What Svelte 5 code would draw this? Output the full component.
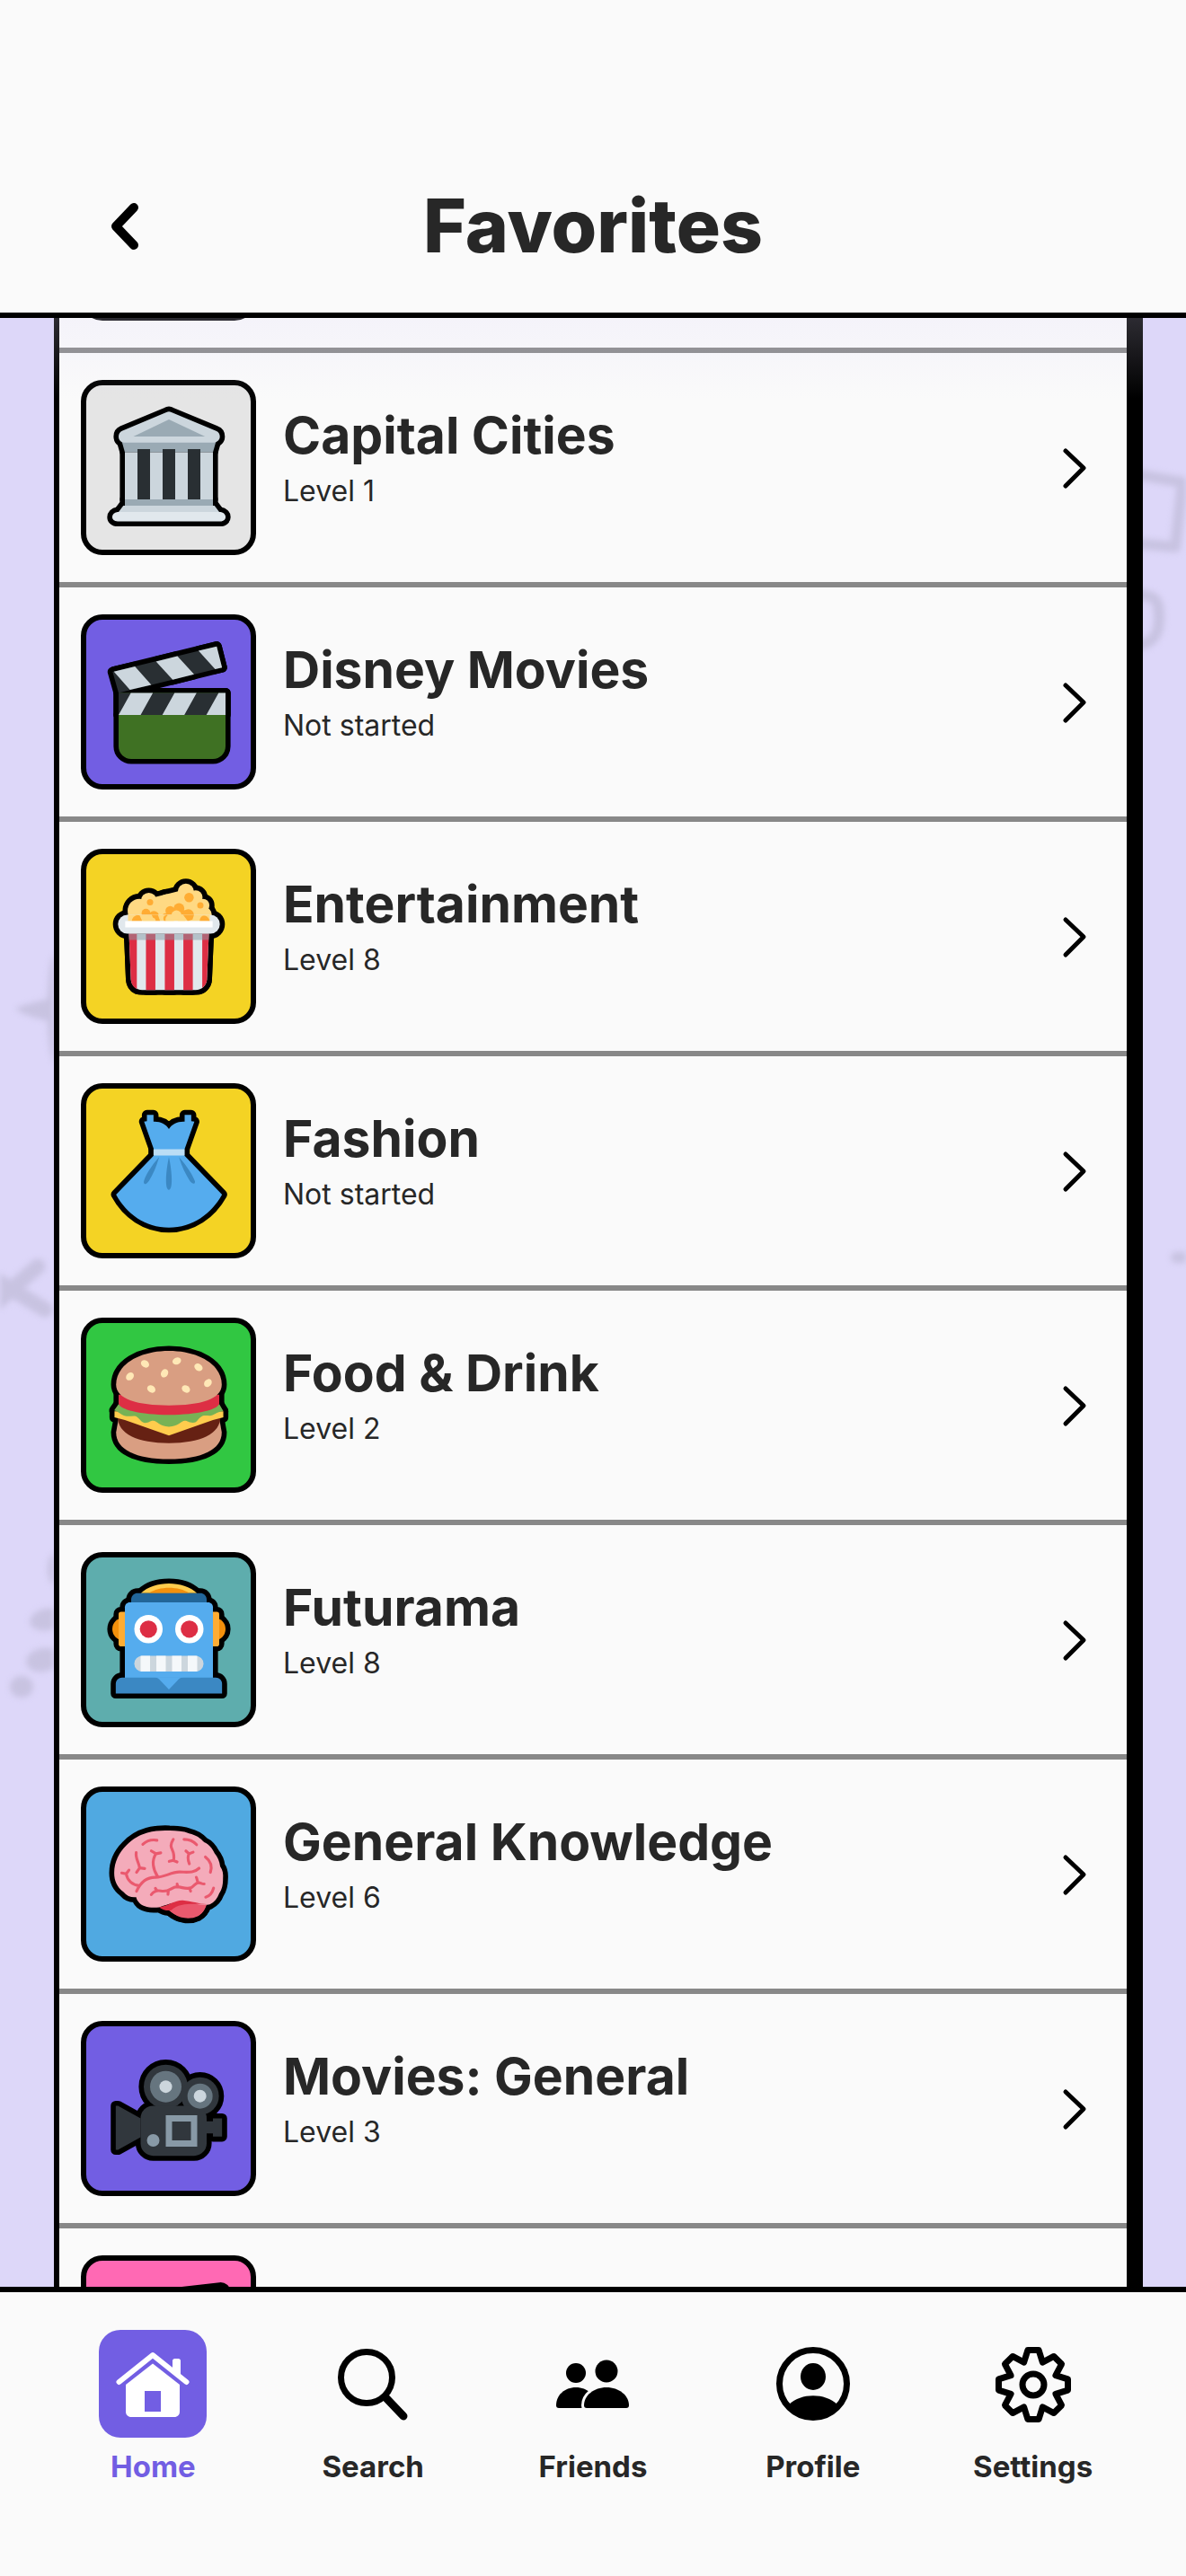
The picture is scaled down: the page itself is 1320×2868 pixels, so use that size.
<script>
  import { onMount } from 'svelte'

  const categories = [
    { title: '', level: '', icon: '', color: '#e5e5e5' },
    { title: 'Capital Cities', level: 'Level 1', icon: 'bank', color: '#e5e5e5' },
    { title: 'Disney Movies', level: 'Not started', icon: 'clapper', color: '#725ee3' },
    { title: 'Entertainment', level: 'Level 8', icon: 'popcorn', color: '#f4d324' },
    { title: 'Fashion', level: 'Not started', icon: 'dress', color: '#f4d324' },
    { title: 'Food & Drink', level: 'Level 2', icon: 'burger', color: '#31c742' },
    { title: 'Futurama', level: 'Level 8', icon: 'robot', color: '#5eadad' },
    { title: 'General Knowledge', level: 'Level 6', icon: 'brain', color: '#50a9e1' },
    { title: 'Movies: General', level: 'Level 3', icon: 'camera', color: '#725ee3' },
    { title: '', level: '', icon: 'note', color: '#ff69b4' },
  ]

  const tabs = ['Home', 'Search', 'Friends', 'Profile', 'Settings']
  let active = 'Home'

  const seeds = [
    [5.6, 8.7, -45],
    [10.4, 4.7, 35],
    [16.6, 7.7, -60],
    [20.5, 3.8, -20],
    [27.4, 5.8, 35],
    [30.4, 10.8, -50],
    [12.4, 12.7, 35],
    [23.4, 12.7, 35],
  ]

  // eight teeth, each one two outer corners and the valley after it
  const point = (deg, r) => {
    const a = (deg * Math.PI) / 180
    return `${(60 + r * Math.sin(a)).toFixed(2)},${(61 - r * Math.cos(a)).toFixed(2)}`
  }
  const gear = [0, 45, 90, 135, 180, 225, 270, 315]
    .map((d) => [point(d - 9, 39), point(d + 9, 39), point(d + 22.5, 27)].join(' '))
    .join(' ')

  let scroller
  onMount(() => {
    scroller.scrollTop = 222
  })
</script>

<style>
  :global(body) {
    margin: 0;
    background: #ddd7f9;
  }
  .app {
    display: flex;
    flex-direction: column;
    height: 100vh;
    font-family: Inter, 'Liberation Sans', sans-serif;
    color: #272727;
    background: #ddd7f9;
  }
  .sprite {
    position: absolute;
    width: 0;
    height: 0;
  }
  header {
    display: grid;
    grid-template-columns: 120px 1fr 120px;
    align-items: center;
    padding: 156px 78px 0;
    height: 192px;
    border-bottom: 6px solid #000;
    background: #fafafa;
  }
  h1 {
    margin: 0;
    font-size: 82px;
    line-height: 192px;
    font-weight: 800;
    text-align: center;
  }
  button {
    padding: 0;
    border: 0;
    background: none;
    font: inherit;
    color: inherit;
    cursor: pointer;
  }
  .back {
    display: flex;
    justify-content: center;
  }
  main {
    position: relative;
    flex: 1;
    min-height: 0;
  }
  main::after {
    content: '';
    position: absolute;
    top: 0;
    left: 0;
    right: 0;
    height: 90px;
    background: linear-gradient(rgba(221, 215, 249, 0.2), rgba(221, 215, 249, 0));
    pointer-events: none;
  }
  .doodles {
    position: absolute;
    top: 0;
    width: 60px;
    height: 2192px;
    fill: #c8c3e1;
    stroke: #c8c3e1;
    stroke-linecap: round;
    stroke-linejoin: round;
    filter: blur(3px);
  }
  .left {
    left: 0;
  }
  .right {
    right: 0;
  }
  .scroller {
    position: relative;
    height: 100%;
    overflow-y: auto;
    scrollbar-width: none;
  }
  ul {
    list-style-type: none;
    margin: 0 48px 0 60px;
    padding: 0;
    border-left: 6px solid #000;
    border-right: 18px solid #000;
    background: #fafafa;
  }
  li {
    border-bottom: 6px solid #888;
  }
  .row {
    display: flex;
    align-items: center;
    gap: 30px;
    width: 100%;
    padding: 30px 36px 30px 24px;
    text-align: left;
  }
  .tile {
    box-sizing: border-box;
    display: flex;
    align-items: center;
    justify-content: center;
    width: 195px;
    height: 195px;
    border: 6px solid #000;
    border-radius: 24px;
  }
  .tile svg {
    width: 126px;
    height: 126px;
    overflow: visible;
  }
  .outline {
    stroke: #000;
    stroke-width: 3.2;
    stroke-linejoin: round;
  }
  .text {
    flex: 1;
    display: flex;
    flex-direction: column;
    height: 144px;
  }
  .title {
    font-size: 57px;
    line-height: 72px;
    font-weight: 700;
  }
  .level {
    font-size: 32px;
    line-height: 52px;
  }
  nav {
    display: flex;
    padding: 42px 48px 96px;
    border-top: 6px solid #000;
    background: #fafafa;
  }
  .tab {
    flex: 1;
    display: flex;
    flex-direction: column;
    align-items: center;
    gap: 12px;
    height: 178px;
    font-size: 33px;
    line-height: 40px;
    font-weight: 700;
  }
  .tab svg {
    width: 120px;
    height: 120px;
    border-radius: 24px;
  }
  .tab.active {
    color: #725ee3;
  }
  .tab.active svg {
    background: #725ee3;
  }
</style>

<svg class="sprite" aria-hidden="true">
  <defs>
    <g id="bank">
      <path fill="#9aaab4" d="M3 9.5h30L32 13H4z" />
      <path fill="#ccd6dd" d="M34.2 8c0 1.1-.9 1.9-2 1.9H3.8C2.7 9.9 2 9.1 2 8c0-.8.4-1.5 1.1-1.8L17.2.3c.5-.3 1.1-.3 1.6 0L33 6.2c.8.3 1.2 1 1.2 1.8z" />
      <path fill="#9aaab4" d="M18 2.6 29.5 8H6.7z" />
      <path fill="#ccd6dd" d="M4 13h28v15H4z" />
      <path fill="#292f33" d="M8 12h4v16H8zm8 0h4v16h-4zm8 0h4v16h-4z" />
      <path fill="#9aaab4" d="M4 28h28v2H4z" />
      <path fill="#ccd6dd" d="M3.5 30h29l1.5 2H2z" />
      <path fill="#e1e8ed" d="M1.7 32h32.6c2.3.3 2.3 3 0 3H1.7c-2.3 0-2.3-2.7 0-3z" />
    </g>
    <g id="clapper">
      <path fill="#3f7123" d="M2 15h34v17c0 2.2-1.8 4-4 4H6c-2.2 0-4-1.8-4-4z" />
      <path fill="#292f33" d="M2 15h34v7H2z" />
      <path fill="#ccd6dd" d="M5.9 15h7L9 22H2zM19.8 15h7l-3.9 7h-7zM33.8 15H36v7h-6.1z" />
      <path fill="#292f33" d="M.1 8.3 33.2.2l1.7 6.7L2 15z" />
      <path fill="#ccd6dd" d="M.5 8.2l6.700-1.600 5.200 5.800L5.600 14zM13.900 5l6.800-1.700L26 9.100l-6.800 1.700zM27.400 1.600 33.200.2l1.700 6.700-2.200.5z" />
    </g>
    <g id="popcorn">
      <g fill="#ffd983">
        <path d="M5 14V9l6-3 12-3 6 5 2.5 6z" />
        <circle cx="8.6" cy="9.6" r="3.7" />
        <circle cx="11.6" cy="6.5" r="2.5" />
        <circle cx="17.3" cy="6.9" r="2.5" />
        <circle cx="23.4" cy="3.7" r="2.6" />
        <circle cx="26.5" cy="5.4" r="2.2" />
        <circle cx="28.8" cy="8" r="2.1" />
        <circle cx="29" cy="11" r="2.6" />
      </g>
      <g fill="#ffac33">
        <circle cx="12" cy="7" r="1" />
        <circle cx="24.4" cy="5.5" r="1.5" />
        <circle cx="28" cy="8" r="1" />
        <circle cx="24.2" cy="10.9" r="1.7" />
        <circle cx="7.7" cy="12.5" r="1.6" />
        <circle cx="10.7" cy="10.5" r="1.4" />
        <circle cx="13.2" cy="11.5" r="1.7" />
        <circle cx="17" cy="11.8" r="1.3" />
        <circle cx="18.4" cy="9.7" r="1.5" />
        <circle cx="21.2" cy="9" r="1.7" />
        <circle cx="23.2" cy="11.5" r="2" />
      </g>
      <path fill="#e1e8ed" d="M5.3 17h25.4l-.6 14.5c-.1 2-1.6 3.4-3.6 3.4h-17c-2 0-3.500-1.400-3.600-3.400z" />
      <path fill="#dd2e44" d="M5.3 17h2.5v17.6c-1.1-.5-1.8-1.7-1.9-3.1zM10.7 17h3v17.9h-3zM16.7 17h3v17.9h-3zM22.6 17h3v17.9h-3zM28.6 17h2.1l-.6 14.5c0 1.1-.6 2.1-1.5 2.8z" />
      <path fill="#8899a6" opacity=".5" d="M5.3 17h25.4l-.1 2H5.4z" />
      <rect x="1.8" y="11" width="32.4" height="6" rx="3" fill="#e1e8ed" />
      <path fill="#ffd983" d="M5 11h26v2H5z" />
      <path fill="#ffac33" d="M6.2 13c.2-1.500 1.300-2.100 2.500-1.800L9.500 13zM12.500 11h2l.7 2h-1.700zM16.500 13c-.7-1.300.2-2 1-2l.3 2zM22.500 11h3.500l-.5 1.500-1.500.5zM27.800 13c.1-2.400 2.700-2.200 3.200 0z" />
      <g fill="#ffd983">
        <circle cx="11" cy="12.5" r="1.4" />
        <circle cx="12.7" cy="13" r="1.1" />
        <circle cx="18.3" cy="12.5" r="1.4" />
        <circle cx="20.4" cy="11.2" r="1.6" />
        <circle cx="22" cy="12.8" r="1.2" />
      </g>
      <path fill="#fff" d="M4.1 13h27.8v2H4.1z" />
    </g>
    <g id="dress">
      <path fill="#55acee" d="M11 .1h2.1v2.1c2.200-.1 4 .8 4.900 2.400.9-1.600 2.700-2.500 5-2.400V.1h2.100v2l1 .1-3.200 9V13l12 12.400C31.500 31.500 25.500 35.900 18 35.900S4.500 31.500 1.200 25.400l12-12.400v-2L10.100 2.200l.9-.1z" />
      <path fill="#bbddf5" d="M13.1 11H23v2h-9.900z" />
      <path fill="#3b88c3" d="M18 13.5c-1.100 5-1.300 10.400 0 10.400s1.100-5.400 0-10.400zM14.9 13.5c-2.500 2.700-4.800 6.500-4.900 8 .2 1.200 1.200.3 1.700-.5 1.200-1.900 2.300-4.400 3.200-7.500zM21.2 13.5c2.500 2.700 4.700 6.300 5.100 7.800 0 1.200-1.200.5-1.700-.3-1.200-1.900-2.500-4.400-3.400-7.500z" />
    </g>
    <g id="burger">
      <path fill="#d99e82" d="M1.2 26.500C1.2 32 7.500 35 18 35s16.800-3 16.800-8.500L34 22H2z" />
      <path fill="#662113" d="M1.7 21.5h32.7c0 5.500-6.400 8.400-16.400 8.400S1.700 27 1.700 21.500z" />
      <path fill="#ffcc4d" d="M.7 19.8h34.600v1.900L32 22.600 18 27.500 4 22.600.7 21.700z" />
      <path fill="#77b255" d="M.6 19.5l1.400-2h32l1.300 2.200c-2.300.3-3 1.500-4.300 1.500s-2-.3-3 .5-1 1.700-2.400 1.700-1.600-.6-2.600-.6-2 1.900-5 1.900-3.800-1.900-5-1.900-1.200.7-2.600.7-2-2.200-3.400-2.200-2.500.3-3.500-.2-1.500-1.100-2.900-1.600z" />
      <path fill="#dd2e44" d="M2 14.500v2.700c0 2 7 3.700 16 3.700s16-1.700 16-3.700v-2.700z" />
      <path fill="#d99e82" d="M34.8 11.300C34.8 16 28 17.900 18 17.900S1.200 16 1.200 11.300C1.200 5 8.500.6 18 .6s16.800 4.400 16.800 10.700z" />
      {#each seeds as [x, y, angle]}
        <ellipse cx={x} cy={y} rx="1.4" ry="1.1" fill="#ffe8b6" transform="rotate({angle} {x} {y})" />
      {/each}
    </g>
    <g id="robot">
      <path fill="#ffcc4d" d="M9.1 3.1C13.3-1 22.700-1 26.900 3.100z" />
      <path fill="#f4900c" d="M11.600 3.100c3.400-2.300 9.500-2.300 12.900 0z" />
      <path fill="#226699" d="M8 3.1h20c1.100 0 2 .9 2 2V7H6V5.100c0-1.100.9-2 2-2z" />
      <circle cx="3.6" cy="14.5" r="3.6" fill="#f4900c" />
      <circle cx="32.4" cy="14.5" r="3.6" fill="#f4900c" />
      <rect x="2" y="9" width="4" height="11" rx=".8" fill="#ffac33" />
      <rect x="30" y="9" width="4" height="11" rx=".8" fill="#ffac33" />
      <path fill="#55acee" d="M5.5 6h25c.8 0 1.5.7 1.5 1.500V30H4V7.500C4 6.700 4.700 6 5.500 6z" />
      <path fill="#3b88c3" d="M3.1 29.900h29.800c1.100 0 2 .9 2 2V35H1.100v-3.100c0-1.100.9-2 2-2z" />
      <path fill="#55acee" d="M13.3 29.8h9.400c-1 .1-1.500.5-2.100 1.200L18 33.700 15.400 31c-.6-.7-1.100-1.100-2.100-1.200z" />
      <circle cx="11.5" cy="14.5" r="4.5" fill="#fff" />
      <circle cx="24.5" cy="14.5" r="4.5" fill="#fff" />
      <circle cx="11.5" cy="14.5" r="2.75" fill="#dd2e44" />
      <circle cx="24.5" cy="14.5" r="2.75" fill="#dd2e44" />
      <rect x="7" y="23" width="22" height="5" rx="2.5" fill="#ccd6dd" />
      <path fill="#f5f8fa" d="M9 23h3v5H9zM14 23h3v5h-3zM19 23h3v5h-3zM24 23h3v5h-3z" />
    </g>
    <g id="brain">
      <path fill="#ea596e" d="M17.8 29.3 22 26.800l8 .8c-.7 2-1.500 2.900-2.700 3.600-2.400 1.200-5.700.8-7.600-.6z" />
      <path fill="#f4abba" d="M.6 17.5C.6 14 2.200 11 4.400 8.800 6.500 6.500 9 5.300 11.100 4.700 13.500 4 16 3.900 18.200 4c2.200 0 4.500.2 6.200.9 2.300.5 3.600 1.500 4.800 2.800 1.700.8 2.600 2 3.300 3.500 1 1.200 1.600 2.500 1.800 4.200.9 1.200 1 2.500.9 3.900 0 2-.3 3.400-1.200 4.700-.6 1.700-1.600 2.800-3 3.500-2.500.7-5.800-.6-9-.9-3 .3-5 1.200-7.100 1.800-2.600.4-5.400-.1-6.500-1.600-.4-.5-.7-1-.8-1.600-1.500.2-2.900-.3-4.100-1.700C1.500 22 .6 20 .6 17.500z" />
      <path fill="#dd2e44" d="M14.9 28.400c3.100-.6 5.100-2.300 7.500-2.200 2.700.2 5.300 1.200 7.600 1.200-4.500.1-8.500-.6-11.300 2-1.400.2-2.800-.2-3.800-1z" />
      <path fill="#ea596e" d="M18.4 29.600c2.900-2.300 6.900-1.700 11.500-2-.6 1.900-1.500 2.900-2.600 3.500-2.700 1.200-6.800.7-8.900-1.500z" />
      <path
        fill="none"
        stroke="#ea596e"
        stroke-width=".9"
        stroke-linecap="round"
        stroke-linejoin="round"
        d="M9.7 8.400c1.200-1.100 2.900-1.600 4.500-1.300M7.600 11c-.3 1.900.8 3 1.100 4.900M7.700 17.300l1-1.400 1.600.2M3 17.500l1.400.3.900-1.200M4.400 17.800c.4 2.100 2 3.600 4.100 3.700M7.700 23.300c1.200-2.600 2.900-4.400 5.900-4.400 2.900.1 5-1.700 7.700-1.700s4.600.4 6.300-1.200M12.400 10.500l1.500.9 1.500-.3M13.900 11.400c-1.500 2.100-1 5 .5 7.200M19.400 6.800c-2 3.300.8 2.800.1 6.800M18.100 13.800l1.300-.3 1.200.5M22.800 6.800c1.600 0 3 .6 4 1.700M23.400 10.500l1 .9 1.300-.5M24.400 11.400c-.7 1.100-.3 2.100.1 3.200M29.600 12.400c1.700 1.300 2.200 3 1.600 4.900M32.200 22.300c-.4 1.500-1.200 2.500-2.500 2.900M12.400 24.400c.8-1.100 1.800-1.400 3-1.200 2.700.6 3.200-1.200 5.200-1.300 1.700.1 3.100 1 4.600.2 1-.7 1.300-1.500 2.300-1.500.7 0 1 .5 1.700.4M13.700 22.400l.5.8M17.800 23.400l-.1.900M20.600 21l.2.900M24.600 22.400l.3.900M26.700 18.900c.4.600.1 1.100.7 1.700"
      />
    </g>
    <g id="camera">
      <path fill="#31373d" d="M1.1 17h.7L9 21v6l-7.200 4h-.7zM30 21.900h2V21h2.900v5.800H32v-1H30z" />
      <circle cx="17" cy="10.9" r="7" fill="#31373d" />
      <circle cx="27.9" cy="13.9" r="6" fill="#31373d" />
      <rect x="9" y="17" width="21" height="15.9" rx="4" fill="#31373d" />
      <circle cx="17" cy="10.9" r="5" fill="#66757f" />
      <circle cx="17" cy="10.9" r="2" fill="#ccd6dd" />
      <circle cx="27.9" cy="13.9" r="4" fill="#66757f" />
      <circle cx="27.9" cy="13.9" r="2" fill="#ccd6dd" />
      <path fill="#8899a6" d="M17 20h10v10H17z" />
      <path fill="#31373d" d="M19 22h6v6h-6z" />
      <circle cx="13" cy="28" r="2" fill="#8899a6" />
    </g>
    <g id="note">
      <path fill="#5dadec" d="M34.2.2 11.8 2.800C10.800 2.900 10 3.800 10 4.800v18.800A8 8 0 0 0 7 23c-3.900 0-7 2.200-7 5s3.100 5 7 5 7-2.200 7-5V10.600l18-2v11a8 8 0 0 0-3-.6c-3.900 0-7 2.200-7 5s3.100 5 7 5 7-2.200 7-5V1.800c0-1-.8-1.700-1.800-1.600z" />
    </g>
  </defs>
</svg>

<div class="app">
  <header>
    <button class="back" aria-label="Back">
      <svg width="60" height="72" fill="none" stroke="#000" stroke-width="10" stroke-linecap="round" stroke-linejoin="round">
        <path d="M41 15 21 36l20 21" />
      </svg>
    </button>
    <h1>Favorites</h1>
  </header>

  <main>
    <svg class="doodles left" aria-hidden="true">
      <path d="M64 708c-8 0-9 12-11 50-14 4-26 6-36 11 12 9 24 10 36 14 1 22 3 48 11 50z" stroke="none" />
      <path d="M-6 1098 42 1056M-6 1070 50 1104" stroke-width="17" fill="none" />
      <ellipse cx="62" cy="1393" rx="9" ry="18" stroke="none" />
      <ellipse cx="52" cy="1449" rx="19" ry="12" transform="rotate(-12 52 1449)" stroke="none" />
      <ellipse cx="48" cy="1494" rx="19" ry="13" transform="rotate(-12 48 1494)" stroke="none" />
      <ellipse cx="24" cy="1524" rx="13" ry="12" stroke="none" />
    </svg>
    <svg class="doodles right" aria-hidden="true">
      <path d="M4 174 56 183 48 255 4 251M4 308c26 0 26 10 26 28s-10 28-26 28" stroke-width="12" fill="none" />
      <path d="M49 1046h18" stroke-width="12" />
    </svg>
    <div class="scroller" bind:this={scroller}>
      <ul>
        {#each categories as { title, level, icon, color }}
          <li>
            <button class="row">
              <span class="tile" style="background: {color}">
                {#if icon}
                  <svg viewBox="0 0 36 36" aria-hidden="true">
                    <use class="outline" href="#{icon}" />
                    <use href="#{icon}" />
                  </svg>
                {/if}
              </span>
              <span class="text">
                <span class="title">{title}</span>
                <span class="level">{level}</span>
              </span>
              <svg width="48" height="60" fill="none" stroke="#000" stroke-width="5" stroke-linecap="round" stroke-linejoin="round" aria-hidden="true">
                <path d="M16 11 36 30 16 50" />
              </svg>
            </button>
          </li>
        {/each}
      </ul>
    </div>
  </main>

  <nav>
    {#each tabs as tab}
      <button class="tab" class:active={tab === active} on:click={() => (active = tab)}>
        <svg viewBox="0 0 120 120" aria-hidden="true">
          {#if tab === 'Home'}
            <path d="M22.5 58 60 28l37.5 30" fill="none" stroke="#fff" stroke-width="6" stroke-linecap="round" stroke-linejoin="round" />
            <path d="M82 47V34.500c0-1.500 1-2.500 2.500-2.500h4c1.500 0 2.500 1 2.500 2.500V54z" fill="#fff" />
            <path d="M60 37.500 90 61v30c0 3.500-2.500 6-6 6H36c-3.500 0-6-2.500-6-6V61z" fill="#fff" />
            <path d="M51 68h18v23H51z" fill="#725ee3" />
          {:else if tab === 'Search'}
            <circle cx="53" cy="53" r="28.5" fill="none" stroke="#000" stroke-width="7" />
            <path d="M74 75 94 96" stroke="#000" stroke-width="9" stroke-linecap="round" />
          {:else if tab === 'Friends'}
            <circle cx="41" cy="48" r="11" />
            <circle cx="75" cy="46" r="12.5" />
            <path d="M22 87c-2 0-3-1-3-3 0-11 9-20 22-20s22 9 22 20c0 2-1 3-3 3z" />
            <path d="M53 87c-2 0-3-1-3-3 0-11 11-20 25-20s25 9 25 20c0 2-1 3-3 3z" stroke="#fafafa" stroke-width="6" paint-order="stroke" />
          {:else if tab === 'Profile'}
            <circle cx="60" cy="60" r="37.5" fill="none" stroke="#000" stroke-width="7" />
            <ellipse cx="60" cy="52" rx="14" ry="15" />
            <path d="M33 83c14-13 40-13 54 0-14 22-40 22-54 0z" />
          {:else}
            <polygon points={gear} fill="none" stroke="#000" stroke-width="7" stroke-linejoin="round" />
            <circle cx="60" cy="61" r="12" fill="none" stroke="#000" stroke-width="7" />
          {/if}
        </svg>
        <span>{tab}</span>
      </button>
    {/each}
  </nav>
</div>
